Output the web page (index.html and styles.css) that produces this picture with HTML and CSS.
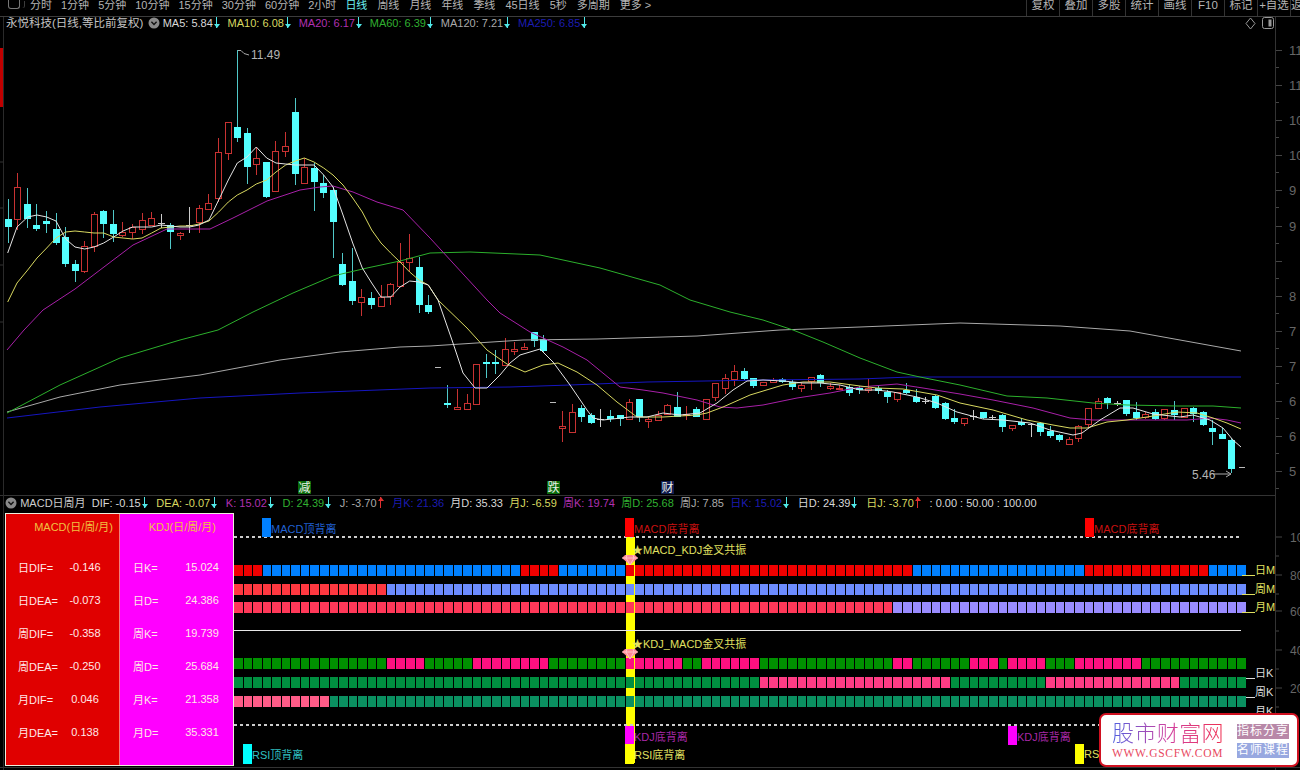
FILE: index.html
```html
<!DOCTYPE html>
<html lang="zh-CN">
<head>
    <meta charset="UTF-8">
    <title>永悦科技 日线</title>
    <link rel="stylesheet" href="styles.css">
</head>
<body>
<div class="page">

    <header class="toolbar">
        <div class="tabs">
            <span class="win-icon"></span>
            <a>分时</a><a>1分钟</a><a>5分钟</a><a>10分钟</a><a>15分钟</a><a>30分钟</a><a>60分钟</a><a>2小时</a>
            <a class="active">日线</a><a>周线</a><a>月线</a><a>年线</a><a>季线</a><a>45日线</a><a>5秒</a><a>多周期</a><a>更多 &gt;</a>
        </div>
        <div class="tools">
            <a>复权</a><a>叠加</a><a>多股</a><a>统计</a><a>画线</a><a>F10</a><a>标记</a><a>+自选</a><a>返</a>
        </div>
    </header>

    <div class="title-row">
        <span class="stock">永悦科技(日线,等比前复权)</span>
        <svg class="chev" width="12" height="12" viewBox="0 0 12 12"><circle cx="6" cy="6" r="5.5" fill="#8a8a8a"/><path d="M3.4 4.8 6 7.4l2.6-2.6" fill="none" stroke="#111" stroke-width="1.4"/></svg>
        <span class="val c-white">MA5: 5.84<i class="down"></i></span>
        <span class="val c-yellow">MA10: 6.08<i class="down"></i></span>
        <span class="val c-purple">MA20: 6.17<i class="down"></i></span>
        <span class="val c-green">MA60: 6.39<i class="down"></i></span>
        <span class="val c-grey">MA120: 7.21<i class="down"></i></span>
        <span class="val c-navy">MA250: 6.85<i class="down"></i></span>
        <div class="title-icons">
            <svg width="11" height="13" viewBox="0 0 11 13"><path d="M5.5 1 10 6.5 5.5 12 1 6.5z" fill="none" stroke="#999"/></svg>
            <svg width="12" height="12" viewBox="0 0 12 12"><rect x=".5" y=".5" width="11" height="11" rx="2" fill="none" stroke="#999"/><rect x="6.5" y="2.5" width="3" height="7" fill="#999"/></svg>
        </div>
    </div>

    <svg id="kline" class="kline" width="1300" height="463" viewBox="0 32 1300 463"></svg>

    <div class="ind-row">
        <svg class="chev" width="12" height="12" viewBox="0 0 12 12"><circle cx="6" cy="6" r="5.5" fill="#8a8a8a"/><path d="M3.4 4.8 6 7.4l2.6-2.6" fill="none" stroke="#111" stroke-width="1.4"/></svg>
        <span class="ind-name">MACD日周月</span>
        <span class="c-white">DIF: -0.15<i class="down"></i></span>
        <span class="c-yellow">DEA: -0.07<i class="down"></i></span>
        <span class="c-purple">K: 15.02<i class="down"></i></span>
        <span class="c-green">D: 24.39<i class="down"></i></span>
        <span class="c-grey">J: -3.70<i class="up"></i></span>
        <span class="c-navy">月K: 21.36</span>
        <span class="c-white">月D: 35.33</span>
        <span class="c-yellow">月J: -6.59</span>
        <span class="c-purple">周K: 19.74</span>
        <span class="c-green">周D: 25.68</span>
        <span class="c-grey">周J: 7.85</span>
        <span class="c-navy">日K: 15.02<i class="down"></i></span>
        <span class="c-white">日D: 24.39<i class="down"></i></span>
        <span class="c-yellow">日J: -3.70<i class="up"></i></span>
        <span class="c-white">: 0.00 : 50.00 : 100.00</span>
    </div>

    <div class="pane">
        <div class="side">
            <div class="side-col side-macd">
                <div class="side-title">MACD(日/周/月)</div>
                <div class="side-grid">
                    <span>日DIF=</span><span>-0.146</span>
                    <span>日DEA=</span><span>-0.073</span>
                    <span>周DIF=</span><span>-0.358</span>
                    <span>周DEA=</span><span>-0.250</span>
                    <span>月DIF=</span><span>0.046</span>
                    <span>月DEA=</span><span>0.138</span>
                </div>
            </div>
            <div class="side-col side-kdj">
                <div class="side-title">KDJ(日/周/月)</div>
                <div class="side-grid">
                    <span>日K=</span><span>15.024</span>
                    <span>日D=</span><span>24.386</span>
                    <span>周K=</span><span>19.739</span>
                    <span>周D=</span><span>25.684</span>
                    <span>月K=</span><span>21.358</span>
                    <span>月D=</span><span>35.331</span>
                </div>
            </div>
        </div>

        <div class="signals">
            <div class="bar"></div>
            <div class="rule dots r1"></div>
            <div class="rule solid r2"></div>
            <div class="rule dots r3"></div>

            <div class="strips" id="strips-macd"></div>
            <div class="strips strips-kdj" id="strips-kdj"></div>

            <!-- 信号标记 -->
            <div class="sig s-top" style="left:28px"><b class="blk-blue"></b><span class="t-blue">MACD顶背离</span></div>
            <div class="sig s-top" style="left:391px"><b class="blk-red"></b><span class="t-red">MACD底背离</span></div>
            <div class="sig s-top" style="left:851px"><b class="blk-red"></b><span class="t-red">MACD底背离</span></div>
            <div class="sig s-kdj" style="left:391px"><b class="blk-mag"></b><span class="t-mag">KDJ底背离</span></div>
            <div class="sig s-kdj" style="left:774px"><b class="blk-mag"></b><span class="t-mag">KDJ底背离</span></div>
            <div class="sig s-rsi" style="left:9px"><b class="blk-cyan"></b><span class="t-cyan">RSI顶背离</span></div>
            <div class="sig s-rsi" style="left:391px"><b class="blk-yellow"></b><span class="t-yellow">RSI底背离</span></div>
            <div class="sig s-rsi" style="left:841px"><b class="blk-yellow"></b><span class="t-yellow">RS</span></div>

            <div class="cross c1">★MACD_KDJ金叉共振</div>
            <div class="cross c2">★KDJ_MACD金叉共振</div>

            <svg class="gem g1" width="16" height="11" viewBox="0 0 16 11"><path d="M3 1h10l3 3-8 7-8-7z" fill="#ff8a96"/><path d="M0 4h16M5 1 4 4l4 7 4-7-1-3" fill="none" stroke="#ffd0d4" stroke-width=".8"/></svg>
            <svg class="gem g2" width="16" height="11" viewBox="0 0 16 11"><path d="M3 1h10l3 3-8 7-8-7z" fill="#ff8a96"/><path d="M0 4h16M5 1 4 4l4 7 4-7-1-3" fill="none" stroke="#ffd0d4" stroke-width=".8"/></svg>
        </div>

        <svg class="pane-axis" width="24" height="260" viewBox="0 0 24 260">
            <g stroke="#444">
                <path d="M0 27h6M0 46h3M0 65h6M0 84h3M0 101h6M0 121h3M0 140h6M0 159h3M0 178h6M0 197h3M0 216h6"/>
            </g>
            <g fill="#666" font-size="12">
                <text x="14" y="32">10</text><text x="14" y="70">80</text><text x="14" y="106">60</text><text x="14" y="145">40</text><text x="14" y="183">20</text>
            </g>
        </svg>
    </div>

    <div class="badge">
        <div class="badge-main">
            <div class="badge-name">股市财富网</div>
            <div class="badge-url">WWW.GSCFW.COM</div>
        </div>
        <div class="badge-links">
            <span class="bl-a">指标分享</span>
            <span class="bl-b">名师课程</span>
        </div>
    </div>
</div>
<script src="chart.js"></script>
</body>
</html>
```

FILE: styles.css
```css
body, html {
    margin: 0;
    padding: 0;
    background-color: #000;
}

.page {
    position: relative;
    width: 1300px;
    height: 770px;
    overflow: hidden;
    font-family: "Liberation Sans", "Noto Sans CJK SC", sans-serif;
    font-size: 11px;
    color: #ccc;
    background-color: #000;
}

.page::before {
    content: "";
    position: absolute;
    left: 3px;
    top: 17px;
    bottom: 0;
    width: 1px;
    background-color: #2a2a2a;
}

.page::after {
    content: "";
    position: absolute;
    left: 0;
    right: 0;
    bottom: 2px;
    height: 1px;
    background-color: #333;
}

/* top bar */
.toolbar {
    display: flex;
    height: 16px;
    border-bottom: 1px solid #3c3c3c;
    overflow: hidden;
}

.tabs {
    display: flex;
    flex: 0 0 1026px;
    gap: 9px;
    line-height: 11px;
    color: #b4b4b4;
}

.tabs a {
    white-space: nowrap;
}

.tabs a.active {
    color: #6cf0f0;
}

.tabs a.active ~ a {
    margin-left: 1px;
}

.win-icon {
    flex: 0 0 12px;
    height: 9px;
    margin: 0 1px 0 8px;
    border: 1px solid #777;
    border-top: none;
    border-radius: 0 0 3px 3px;
    box-sizing: border-box;
    box-shadow: 5px 0 0 -1px #000, 6px 0 0 -1px #3c3c3c;
}

.tools {
    display: flex;
    flex: 1;
    overflow: hidden;
}

.tools a {
    flex: 0 0 33px;
    border-left: 1px solid #333;
    box-sizing: border-box;
    text-align: center;
    font-size: 11.5px;
    line-height: 11px;
    color: #b4b4b4;
    white-space: nowrap;
}

.tools a:last-child {
    flex-basis: 9px;
}

/* stock title */
.title-row, .ind-row {
    display: flex;
    align-items: flex-start;
    width: 1276px;
    height: 15px;
    border-right: 1px solid #333;
    box-sizing: border-box;
    line-height: 12px;
    white-space: nowrap;
}

.title-row {
    gap: 7.8px;
    padding-left: 6px;
}

.stock {
    font-size: 11.5px;
    margin-right: -3.4px;
    color: #c4c4c4;
}

.chev {
    flex: none;
    margin-top: 0;
    margin-right: -4.9px;
}

.title-icons {
    display: flex;
    gap: 6px;
    margin-left: auto;
    margin-right: 1px;
}

.ind-row {
    height: 15px;
    gap: 6.2px;
    padding-left: 5px;
    padding-top: 1px;
    border-top: 1px solid #333;
}

.ind-row .chev {
    margin-right: -3px;
}

.ind-row i {
    margin-right: 2.5px;
}

.c-white { color: #d8d8d8; }
.c-yellow { color: #d8d860; }
.c-purple { color: #b030b0; }
.c-green { color: #30b030; }
.c-grey { color: #aaa; }
.c-navy { color: #1c1cb0; }

/* arrows next to the values */
.down, .up {
    position: relative;
    display: inline-block;
    width: 6px;
    height: 11px;
    margin-left: 1px;
    vertical-align: -1px;
}

.down::before, .up::before {
    content: "";
    position: absolute;
    left: 2.5px;
    top: 0;
    width: 1px;
    height: 11px;
    background-color: #50e8e8;
}

.down::after {
    content: "";
    position: absolute;
    left: 0;
    bottom: 0;
    border-left: 3px solid transparent;
    border-right: 3px solid transparent;
    border-top: 4px solid #50e8e8;
}

.up::before {
    background-color: #e03030;
}

.up::after {
    content: "";
    position: absolute;
    left: 0;
    top: 0;
    border-left: 3px solid transparent;
    border-right: 3px solid transparent;
    border-bottom: 4px solid #e03030;
}

.kline {
    display: block;
}

/* lower pane */
.pane {
    display: flex;
    height: 260px;
}

.side {
    display: flex;
    flex: 0 0 229px;
    height: 253px;
    margin: 3px 0 0 5px;
    border: 1px solid #eed;
    box-sizing: border-box;
}

.side-col {
    flex: 1;
    color: #ffe8e8;
}

.side-macd {
    background-color: #e00000;
    border-right: 1px solid #f08080;
}

.side-kdj {
    background-color: #ff00ff;
}

.side-title {
    height: 27px;
    margin-bottom: 9px;
    line-height: 27px;
    text-align: right;
    color: #f0c040;
}

.side-macd .side-title {
    padding-right: 6px;
}

.side-kdj .side-title {
    padding-right: 17px;
}

.side-grid {
    display: grid;
    grid-auto-rows: 33px;
    align-items: center;
    white-space: nowrap;
}

.side-macd .side-grid {
    grid-template-columns: 48px 38px;
    padding-left: 12px;
}

.side-kdj .side-grid {
    grid-template-columns: 51px 36px;
    padding-left: 13px;
}

.side-grid span:nth-child(even) {
    text-align: center;
}

.signals {
    position: relative;
    flex: 0 0 1041px;
    width: 1041px;
    padding-top: 55px;
    box-sizing: border-box;
    overflow: hidden;
}

.pane-axis {
    flex: none;
    border-left: 1px solid #333;
}

.strips {
    position: relative;
    display: flex;
    flex-direction: column;
    gap: 7.5px;
}

.strips-kdj {
    gap: 8px;
    margin-top: 44.5px;
}

.strip {
    display: flex;
    height: 11px;
}

.cells {
    display: grid;
    flex: 0 0 1012px;
    grid-template-columns: repeat(106, 1fr);
    gap: 1px;
}

.tag {
    display: flex;
    flex: none;
    align-items: flex-end;
    height: 12px;
    margin: -1px 0 0 -4px;
    line-height: 12px;
    white-space: nowrap;
    color: #e0e060;
}

.tag::before {
    content: "";
    width: 13px;
    height: 12px;
    border-bottom: 1px solid currentColor;
    box-sizing: border-box;
}

.strips-kdj .tag {
    margin-top: 9px;
    color: #ddd;
}

.m1-a { background-color: #f00000; }
.m1-b { background-color: #0080ff; }
.m2-a { background-color: #ff3840; }
.m2-b { background-color: #6c8cff; }
.m3-a { background-color: #ff3858; }
.m3-b { background-color: #9a8cff; }
.k1-a { background-color: #009000; }
.k1-b { background-color: #ff1080; }
.k2-a { background-color: #009040; }
.k2-b { background-color: #ff3c84; }
.k3-a { background-color: #0a9060; }
.k3-b { background-color: #ff5c88; }

/* overlays on the signal canvas */
.bar {
    position: absolute;
    left: 392px;
    top: 27px;
    width: 9px;
    height: 226px;
    background-color: #ffff00;
}

.rule {
    position: absolute;
    left: 0;
    width: 1007px;
}

.rule.dots {
    height: 2px;
    background: repeating-linear-gradient(90deg, #ccc 0, #ccc 3px, transparent 3px, transparent 6px);
}

.rule.solid {
    height: 1px;
    background-color: #e8e8e8;
}

.r1 { top: 26px; }
.r2 { top: 120px; }
.r3 { top: 214px; }

.sig {
    position: absolute;
    display: flex;
    align-items: center;
    height: 19px;
    white-space: nowrap;
}

.sig b {
    flex: none;
    width: 9px;
    height: 100%;
}

.s-top { top: 8px; }
.s-kdj { top: 216px; }
.s-rsi { top: 234px; height: 20px; }

.blk-blue { background-color: #0080ff; }
.blk-red { background-color: #ff0000; }
.blk-mag { background-color: #ff00ff; }
.blk-cyan { background-color: #00ffff; }
.blk-yellow { background-color: #ffff00; }

.t-blue { color: #2060d0; }
.t-red { color: #c81010; }
.t-mag { color: #a828a8; }
.t-cyan { color: #30c0c0; }
.t-yellow { color: #e0e060; }

.cross {
    position: absolute;
    left: 398px;
    color: #e0e060;
    line-height: 12px;
    white-space: nowrap;
}

.c1 { top: 34px; }
.c2 { top: 128px; }

.gem {
    position: absolute;
    left: 388px;
}

.g1 { top: 44px; }
.g2 { top: 138px; }

/* site badge */
.badge {
    position: absolute;
    left: 1099px;
    top: 713px;
    display: flex;
    justify-content: space-between;
    width: 200px;
    height: 54px;
    padding: 7px 8px 0 11px;
    box-sizing: border-box;
    background-color: #fff;
    border: 2px solid #d01020;
    border-radius: 7px;
}

.badge-name {
    font-size: 22px;
    line-height: 24px;
    letter-spacing: .4px;
    white-space: nowrap;
    color: transparent;
    background: linear-gradient(90deg, #5060e0, #d040a0 50%, #f03050);
    background-clip: text;
    -webkit-background-clip: text;
    font-weight: 300;
}

.badge-url {
    margin-top: 1px;
    font-family: "Liberation Serif", serif;
    font-size: 11.5px;
    line-height: 12px;
    letter-spacing: .7px;
    white-space: nowrap;
    color: #e84860;
}

.badge-links {
    display: flex;
    flex-direction: column;
    gap: 4px;
    margin-top: 2px;
}

.badge-links span {
    height: 15px;
    line-height: 15px;
    font-size: 12px;
    letter-spacing: 1px;
    white-space: nowrap;
    color: #fff;
}

.bl-a { background-color: #b888a8; }
.bl-b { background-color: #98a8e0; }
```

FILE: chart.js
```js
// 每根K线: [上影, 实体上, 实体下, 下影, 类型] r=阳 c=阴 w=十字
const bars = [
    [199,219,227,243,'c'],[173,187,219,230,'r'],[188,204,219,228,'c'],[204,225,229,231,'c'],[211,221,224,233,'c'],
    [213,229,243,245,'c'],[227,237,264,267,'c'],[260,264,271,282,'c'],[241,246,271,273,'r'],[212,214,246,252,'r'],
    [210,211,224,238,'c'],[210,224,234,242,'c'],[222,232,235,237,'r'],[224,227,232,239,'r'],[213,220,229,234,'r'],
    [212,218,225,226,'r'],[214,223,223,228,'w'],[223,225,232,249,'c'],[232,233,235,240,'r'],[207,225,225,233,'w'],
    [205,208,222,233,'r'],[194,203,209,210,'r'],[138,152,198,202,'r'],[122,122,153,160,'r'],[50,127,138,142,'c'],
    [128,133,167,184,'c'],[147,158,164,175,'r'],[162,162,197,198,'c'],[141,151,191,191,'r'],[132,146,151,157,'r'],
    [98,112,174,185,'c'],[158,167,183,183,'r'],[163,168,182,211,'c'],[175,183,193,198,'c'],[187,190,222,258,'c'],
    [253,264,285,286,'c'],[248,281,301,305,'c'],[289,297,302,316,'r'],[292,298,305,309,'c'],[285,297,306,306,'r'],
    [283,284,296,305,'r'],[243,262,286,287,'r'],[234,258,262,272,'r'],[257,267,305,313,'c'],[295,305,312,314,'c'],
    null,
    [385,403,405,408,'c'],[389,407,409,409,'r'],[394,403,409,409,'r'],[364,364,404,404,'r'],[354,362,364,378,'c'],
    [350,362,363,374,'c'],[338,349,365,365,'r'],[342,349,351,355,'r'],[343,347,349,350,'r'],[332,332,341,347,'c'],
    [335,339,351,353,'c'],
    null,
    [411,426,428,442,'r'],[404,412,432,432,'r'],[405,408,417,422,'c'],[413,415,423,424,'c'],[409,419,419,427,'w'],
    [410,416,419,422,'c'],[415,415,419,426,'c'],[399,402,419,420,'r'],[399,399,417,422,'c'],[417,419,421,428,'r'],
    [411,415,420,421,'r'],[404,405,414,415,'r'],[392,407,417,417,'c'],[406,414,415,420,'r'],[407,409,417,417,'c'],
    [399,399,419,419,'r'],[383,383,397,401,'r'],[374,378,388,394,'r'],[365,371,379,386,'r'],[368,371,379,380,'c'],
    [378,378,386,388,'c'],[382,382,385,386,'r'],[378,380,382,383,'r'],[378,379,382,383,'c'],[380,382,387,390,'c'],
    [383,385,388,392,'r'],[377,377,381,390,'r'],[374,375,383,387,'c'],[383,386,388,390,'r'],[385,388,389,390,'r'],
    [385,387,393,396,'c'],[386,388,390,394,'c'],[379,388,390,393,'r'],[385,388,391,394,'c'],[390,392,397,403,'c'],
    [392,392,399,402,'r'],[383,390,393,394,'c'],[389,397,402,403,'c'],[397,401,401,404,'w'],[395,396,408,409,'c'],
    [402,403,419,420,'c'],[409,418,422,424,'c'],[418,418,423,426,'r'],[410,416,416,420,'w'],[412,412,418,419,'c'],
    [415,417,417,420,'w'],[414,415,427,432,'c'],[425,425,428,431,'r'],[418,422,425,426,'c'],[423,424,424,437,'w'],
    [422,423,432,436,'c'],[426,431,436,438,'c'],[434,435,440,442,'c'],[437,439,444,445,'r'],[425,426,438,442,'r'],
    [408,408,424,427,'r'],[398,401,408,409,'r'],[397,398,403,409,'c'],[401,403,403,406,'w'],[400,400,414,416,'c'],
    [402,412,418,420,'c'],[412,414,417,419,'r'],[409,412,419,420,'c'],[409,409,418,420,'r'],[401,410,415,420,'c'],
    [408,408,417,417,'r'],[407,408,414,422,'c'],[411,412,425,426,'c'],[420,428,432,445,'c'],[428,434,439,439,'c'],
    [438,440,469,473,'c']
];

const ma5 = '7.7,253 17,227 27.7,217 37,215 46.7,217 56,221 65.7,239 75,247 84.7,249 94,247 103.7,243 113.7,237 123,231 132.7,227 142,227 151.7,227 161,225 170.7,226 180,227 189.7,227 199,225 209,220 218.7,200 228.3,180 237.3,163 247,157 256.3,147 266.7,158 276,163 285.7,164 295.3,165 304.3,165 314,165 323.7,175 333,187 343,215 352.7,243 362.3,268 371.7,283 381,297 390.7,297 400,287 409.7,281 419,282 428.3,285 438,300 453,343 463,373 475,388 487,388 500,375 510,363 520,355 540,349 553,362 570,385 587,410 593,418 603,420 630,417 647,417 663,413 680,415 700,413 717,403 733,390 747,381 763,380 783,381 803,383 820,383 840,385 860,390 877,390 893,392 917,397 937,403 957,412 983,419 1003,420 1030,423 1050,430 1073,435 1082,433 1100,420 1120,408 1133,408 1153,414 1180,417 1193,415 1210,420 1223,428 1233,440 1241,447';
const ma10 = '7.7,302 17,283 27.7,270 37,258 46.7,248 56,238 65.7,232 75,231 84.7,232 94,233 103.7,233 113.7,237 123,238 132.7,239 142,238 151.7,233 161,228 170.7,227 180,226 189.7,226 199,224 209,221 218.7,212 228.3,202 237.3,195 247,190 256.3,184 266.7,180 276,172 285.7,165 295.3,161 304.3,158 314,162 323.7,168 333,175 343,185 352.7,198 362.3,212 371.7,230 381,243 390.7,253 400,262 409.7,272 419,280 428.3,285 438,300 467,328 487,350 507,364 525,372 543,365 558,363 577,372 597,385 617,402 637,417 663,417 697,415 707,413 723,407 750,395 783,385 803,382 830,382 860,386 877,388 903,389 937,395 960,403 993,410 1027,420 1053,425 1070,428 1087,428 1107,422 1127,420 1147,417 1177,412 1197,413 1213,418 1227,423 1241,429';
const ma20 = '7,350 24,330 43,310 75,289 100,270 133,245 167,229 187,229 210,229 233,218 267,201 300,190 320,187 333,186 353,192 377,202 403,210 430,238 487,300 500,313 530,332 563,347 587,360 620,387 643,390 663,393 697,400 720,407 737,408 763,405 797,398 830,393 860,387 897,384 923,388 960,394 993,400 1033,408 1070,418 1093,420 1127,420 1187,420 1210,418 1227,420 1241,423';
const ma60 = '7,413 60,385 120,358 180,340 218,330 253,312 293,293 333,276 367,268 400,261 430,253 470,252 540,255 600,268 660,285 690,300 730,312 763,320 793,330 823,342 860,358 897,372 920,377 960,385 1007,396 1047,398 1093,403 1127,405 1177,406 1213,406 1241,408';
const ma120 = '7,412 60,397 120,385 200,375 280,360 340,352 400,347 430,346 523,340 597,339 697,336 780,330 860,327 960,323 1060,326 1130,331 1180,340 1241,351';
const ma250 = '7,418 100,407 200,398 300,393 430,388 510,387 570,385 647,382 763,380 860,379 910,377 1241,377';

function drawChart() {
    let out = '';

    // 边框和刻度
    out += '<rect x="0" y="48" width="3" height="59" fill="#c00000"/>';
    [162, 208, 265, 322].forEach((y) => {
        out += `<path d="M0 ${y}h3" stroke="#333"/>`;
    });
    out += '<path d="M1275.5 32v463" stroke="#333"/>';
    const labels = ['11', '11', '10', '10', '9', '9', '', '8', '7', '7', '6', '6', '5'];
    labels.forEach((text, i) => {
        const y = Math.round(50 + i * 35.1);
        out += `<path d="M1276 ${y}.5h6M1276 ${y + 17}.5h3" stroke="#444"/>`;
        if (text) out += `<text x="1289" y="${y + 5}" fill="#666" font-size="13">${text}</text>`;
    });

    // K线
    bars.forEach((b, i) => {
        if (!b) return;
        const x = Math.round(7.7 + i * 9.56) + 0.5;
        const [hi, top, bot, lo, kind] = b;
        if (kind === 'r') {
            out += `<path d="M${x} ${hi}V${top}M${x} ${bot}V${lo}" stroke="#c83232"/>`;
            const h = Math.max(bot - top, 1);
            out += `<rect x="${x - 3}" y="${top + 0.5}" width="6" height="${h}" fill="#000" stroke="#c83232"/>`;
        } else if (kind === 'c') {
            out += `<path d="M${x} ${hi}V${lo}" stroke="#50c8c8"/>`;
            out += `<rect x="${x - 3.5}" y="${top}" width="7" height="${Math.max(bot - top, 2)}" fill="#54ffff"/>`;
        } else {
            out += `<path d="M${x} ${hi}V${lo}M${x - 3.5} ${top + 0.5}h7" stroke="#ccc"/>`;
        }
    });

    // 均线
    [[ma250, '#1616c0'], [ma120, '#a8a8a8'], [ma60, '#2cb02c'], [ma20, '#a820a8'], [ma10, '#d8d860'], [ma5, '#e4e4e4']].forEach(([pts, color]) => {
        out += `<polyline points="${pts}" fill="none" stroke="${color}" stroke-width="1" stroke-linejoin="round"/>`;
    });

    // 最高最低价
    out += '<path d="M238 50.5h3l3 3 5 1.5" fill="none" stroke="#aaa"/>';
    out += '<text x="251" y="59" fill="#b4b4b4" font-size="12">11.49</text>';
    out += '<text x="1192" y="479" fill="#b4b4b4" font-size="12">5.46</text>';
    out += '<path d="M1213 474h18m-5-3 5 3-5 3" fill="none" stroke="#aaa"/>';

    // 停牌短横
    [[435, 367], [550, 402], [1239, 467]].forEach(([x, y]) => {
        out += `<path d="M${x} ${y}.5h6" stroke="#bbb"/>`;
    });

    // 底部文字
    [[298, '减', '#0a6a0a'], [547, '跌', '#0a6a0a'], [661, '财', '#101c50']].forEach(([x, text, bg]) => {
        out += `<rect x="${x}" y="481" width="13" height="13" fill="${bg}"/>`;
        out += `<text x="${x + 0.5}" y="492" fill="#e8f0e8" font-size="12">${text}</text>`;
    });

    document.getElementById('kline').innerHTML = out;
}

function drawStrips(boxId, prefix, rows) {
    const box = document.getElementById(boxId);
    box.innerHTML = rows.map((row, r) => {
        let cells = '';
        let kind = row.first;
        row.runs.forEach((count) => {
            for (let n = 0; n < count; n++) cells += `<div class="${prefix}${r + 1}-${kind}"></div>`;
            kind = kind === 'a' ? 'b' : 'a';
        });
        return `<div class="strip"><div class="cells">${cells}</div><span class="tag">${row.label}</span></div>`;
    }).join('');
}

drawChart();

drawStrips('strips-macd', 'm', [
    { label: '日M', first: 'a', runs: [3, 27, 4, 7, 30, 18, 13, 4] },
    { label: '周M', first: 'a', runs: [16, 90] },
    { label: '月M', first: 'a', runs: [69, 37] }
]);

drawStrips('strips-kdj', 'k', [
    { label: '日K', first: 'a', runs: [16, 4, 5, 8, 8, 6, 2, 6, 14, 2, 6, 3, 1, 4, 3, 7, 11] },
    { label: '周K', first: 'a', runs: [55, 20, 10, 14, 7] },
    { label: '月K', first: 'b', runs: [10, 96] }
]);
```
